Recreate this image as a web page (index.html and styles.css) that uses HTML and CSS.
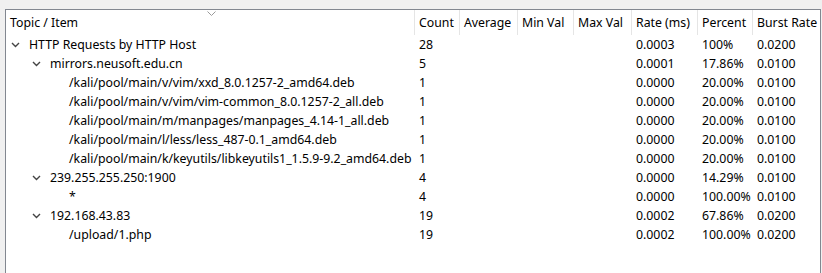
FILE: index.html
```html
<!DOCTYPE html>
<html>
<head>
<meta charset="utf-8">
<link rel="stylesheet" href="styles.css">
</head>
<body>
<div class="frame">
  <div class="panel">
    <div class="row head">
      <div class="c c1 hc">Topic / Item
        <svg class="sort" width="9" height="5" viewBox="0 0 9 5"><path d="M0.5 0.5 L4.5 4.5 L8.5 0.5" fill="none" stroke="#9a9a9a" stroke-width="1"/></svg>
      </div>
      <div class="c c2 hc">Count</div>
      <div class="c c3 hc">Average</div>
      <div class="c c4 hc">Min Val</div>
      <div class="c c5 hc">Max Val</div>
      <div class="c c6 hc">Rate (ms)</div>
      <div class="c c7 hc">Percent</div>
      <div class="c c8 hc">Burst Rate</div>
    </div>

    <div class="row">
      <div class="c c1 l0"><svg class="exp" width="9" height="6" viewBox="0 0 9 6"><path d="M1 1 L4.5 4.5 L8 1" fill="none" stroke="#444" stroke-width="1.4"/></svg>HTTP Requests by HTTP Host</div>
      <div class="c c2">28</div><div class="c c3"></div><div class="c c4"></div><div class="c c5"></div>
      <div class="c c6">0.0003</div><div class="c c7">100%</div><div class="c c8">0.0200</div>
    </div>
    <div class="row">
      <div class="c c1 l1"><svg class="exp" width="9" height="6" viewBox="0 0 9 6"><path d="M1 1 L4.5 4.5 L8 1" fill="none" stroke="#444" stroke-width="1.4"/></svg>mirrors.neusoft.edu.cn</div>
      <div class="c c2">5</div><div class="c c3"></div><div class="c c4"></div><div class="c c5"></div>
      <div class="c c6">0.0001</div><div class="c c7">17.86%</div><div class="c c8">0.0100</div>
    </div>
    <div class="row">
      <div class="c c1 l2">/kali/pool/main/v/vim/xxd_8.0.1257-2_amd64.deb</div>
      <div class="c c2">1</div><div class="c c3"></div><div class="c c4"></div><div class="c c5"></div>
      <div class="c c6">0.0000</div><div class="c c7">20.00%</div><div class="c c8">0.0100</div>
    </div>
    <div class="row">
      <div class="c c1 l2">/kali/pool/main/v/vim/vim-common_8.0.1257-2_all.deb</div>
      <div class="c c2">1</div><div class="c c3"></div><div class="c c4"></div><div class="c c5"></div>
      <div class="c c6">0.0000</div><div class="c c7">20.00%</div><div class="c c8">0.0100</div>
    </div>
    <div class="row">
      <div class="c c1 l2">/kali/pool/main/m/manpages/manpages_4.14-1_all.deb</div>
      <div class="c c2">1</div><div class="c c3"></div><div class="c c4"></div><div class="c c5"></div>
      <div class="c c6">0.0000</div><div class="c c7">20.00%</div><div class="c c8">0.0100</div>
    </div>
    <div class="row">
      <div class="c c1 l2">/kali/pool/main/l/less/less_487-0.1_amd64.deb</div>
      <div class="c c2">1</div><div class="c c3"></div><div class="c c4"></div><div class="c c5"></div>
      <div class="c c6">0.0000</div><div class="c c7">20.00%</div><div class="c c8">0.0100</div>
    </div>
    <div class="row">
      <div class="c c1 l2">/kali/pool/main/k/keyutils/libkeyutils1_1.5.9-9.2_amd64.deb</div>
      <div class="c c2">1</div><div class="c c3"></div><div class="c c4"></div><div class="c c5"></div>
      <div class="c c6">0.0000</div><div class="c c7">20.00%</div><div class="c c8">0.0100</div>
    </div>
    <div class="row">
      <div class="c c1 l1"><svg class="exp" width="9" height="6" viewBox="0 0 9 6"><path d="M1 1 L4.5 4.5 L8 1" fill="none" stroke="#444" stroke-width="1.4"/></svg>239.255.255.250:1900</div>
      <div class="c c2">4</div><div class="c c3"></div><div class="c c4"></div><div class="c c5"></div>
      <div class="c c6">0.0000</div><div class="c c7">14.29%</div><div class="c c8">0.0100</div>
    </div>
    <div class="row">
      <div class="c c1 l2">*</div>
      <div class="c c2">4</div><div class="c c3"></div><div class="c c4"></div><div class="c c5"></div>
      <div class="c c6">0.0000</div><div class="c c7">100.00%</div><div class="c c8">0.0100</div>
    </div>
    <div class="row">
      <div class="c c1 l1"><svg class="exp" width="9" height="6" viewBox="0 0 9 6"><path d="M1 1 L4.5 4.5 L8 1" fill="none" stroke="#444" stroke-width="1.4"/></svg>192.168.43.83</div>
      <div class="c c2">19</div><div class="c c3"></div><div class="c c4"></div><div class="c c5"></div>
      <div class="c c6">0.0002</div><div class="c c7">67.86%</div><div class="c c8">0.0200</div>
    </div>
    <div class="row">
      <div class="c c1 l2">/upload/1.php</div>
      <div class="c c2">19</div><div class="c c3"></div><div class="c c4"></div><div class="c c5"></div>
      <div class="c c6">0.0002</div><div class="c c7">100.00%</div><div class="c c8">0.0200</div>
    </div>
  </div>
</div>
</body>
</html>
```

FILE: styles.css
```css
html, body {
  margin: 0;
  padding: 0;
  background: #f0f0f0;
}
.frame {
  height: 273px;
  padding: 9px 1px 0 5px;
  box-sizing: border-box;
  background: #f0f0f0;
}
.panel {
  height: 100%;
  background: #fff;
  border-top: 1px solid #828790;
  border-left: 1px solid #828790;
  border-right: 1px solid #828790;
  box-sizing: border-box;
  font-family: "Noto Sans", "Open Sans", sans-serif;
  font-size: 12.3px;
  color: #000;
}
.row {
  display: flex;
  height: 19px;
  line-height: 19px;
  white-space: nowrap;
}
.row.head {
  height: 25px;
  line-height: 25px;
}
.c {
  box-sizing: border-box;
  padding-left: 4px;
  overflow: visible;
  flex: none;
}
.hc {
  border-right: 1px solid #e5e5e5;
  padding-left: 4px;
}
.c1 { width: 409px; position: relative; }
.c2 { width: 45px; }
.c3 { width: 58px; }
.c4 { width: 56px; }
.c5 { width: 58px; }
.c6 { width: 66px; }
.c7 { width: 55px; }
.c8 { width: 66px; border-right: none; }
.hc.c8 { border-right: none; }
.sort {
  position: absolute;
  left: 201px;
  top: 1px;
}
.l0 { padding-left: 5px; }
.l1 { padding-left: 26px; }
.l2 { padding-left: 63px; }
.exp {
  display: inline-block;
  vertical-align: middle;
  margin: -2px 9px 0 0;
}
```
